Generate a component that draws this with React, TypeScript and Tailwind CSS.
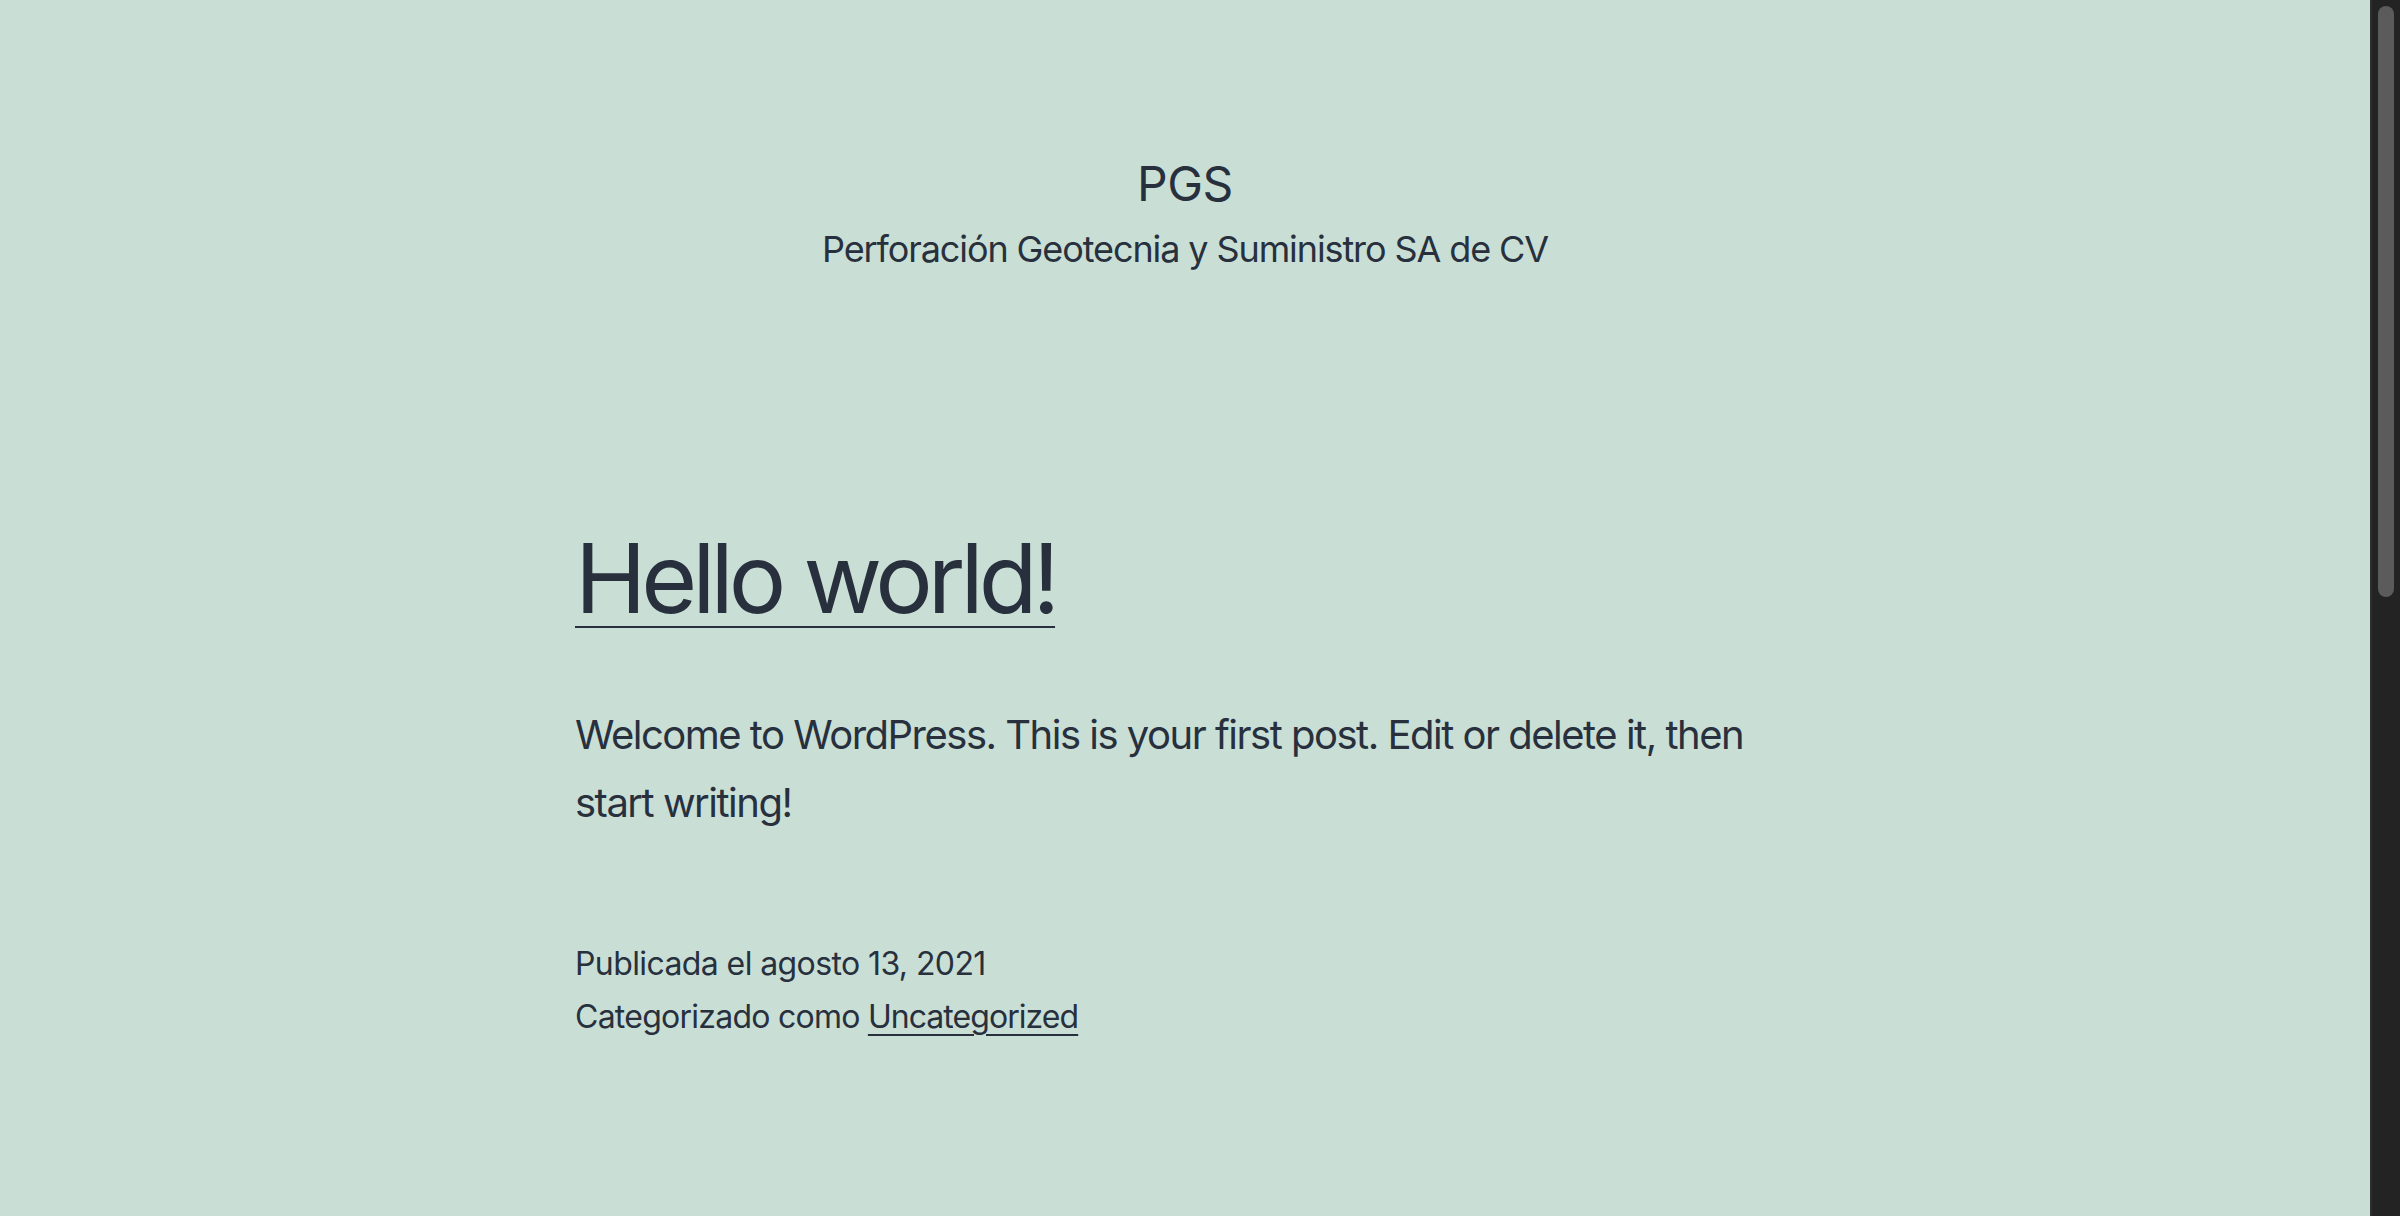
import React from "react";

export default function App() {
  const font = { fontFamily: "Inter, 'Noto Sans', sans-serif" };
  return (
    <div className="flex h-[1216px] w-full overflow-hidden bg-[#c9dfd6] text-[#28303d]" style={font}>
      <main className="flex-1 flex flex-col">
        <header className="flex flex-col items-center pt-[153px]">
          <p className="text-[48px] leading-[62px] font-normal tracking-[-0.5px]">PGS</p>
          <p className="mt-[9px] text-[36px] leading-[50px] font-normal tracking-[-1.1px]">
            Perforación Geotecnia y Suministro SA de CV
          </p>
        </header>
        <article className="mx-auto w-[1220px] mt-[242px]">
          <h2 className="text-[96px] leading-[125px] font-normal tracking-[-5px]">
            <a className="underline decoration-2 underline-offset-[13px]" href="#">
              Hello world!
            </a>
          </h2>
          <p className="mt-[60px] text-[40px] leading-[68px] tracking-[-1.5px]">
            Welcome to WordPress. This is your first post. Edit or delete it, then start writing!
          </p>
          <div className="mt-[100px] text-[32px] leading-[53px] tracking-[-0.6px]">
            <p>Publicada el agosto 13, 2021</p>
            <p className="tracking-[-0.75px]">
              Categorizado como{" "}
              <a className="underline decoration-2 underline-offset-[6px] tracking-[-0.95px]" href="#">
                Uncategorized
              </a>
            </p>
          </div>
        </article>
      </main>
      <aside className="w-[30px] shrink-0 bg-[#232323] border-l-2 border-[#2e2e2e] pt-[6px] flex justify-center">
        <div className="w-[16px] h-[591px] rounded-full bg-[#5b5b5b]" />
      </aside>
    </div>
  );
}
